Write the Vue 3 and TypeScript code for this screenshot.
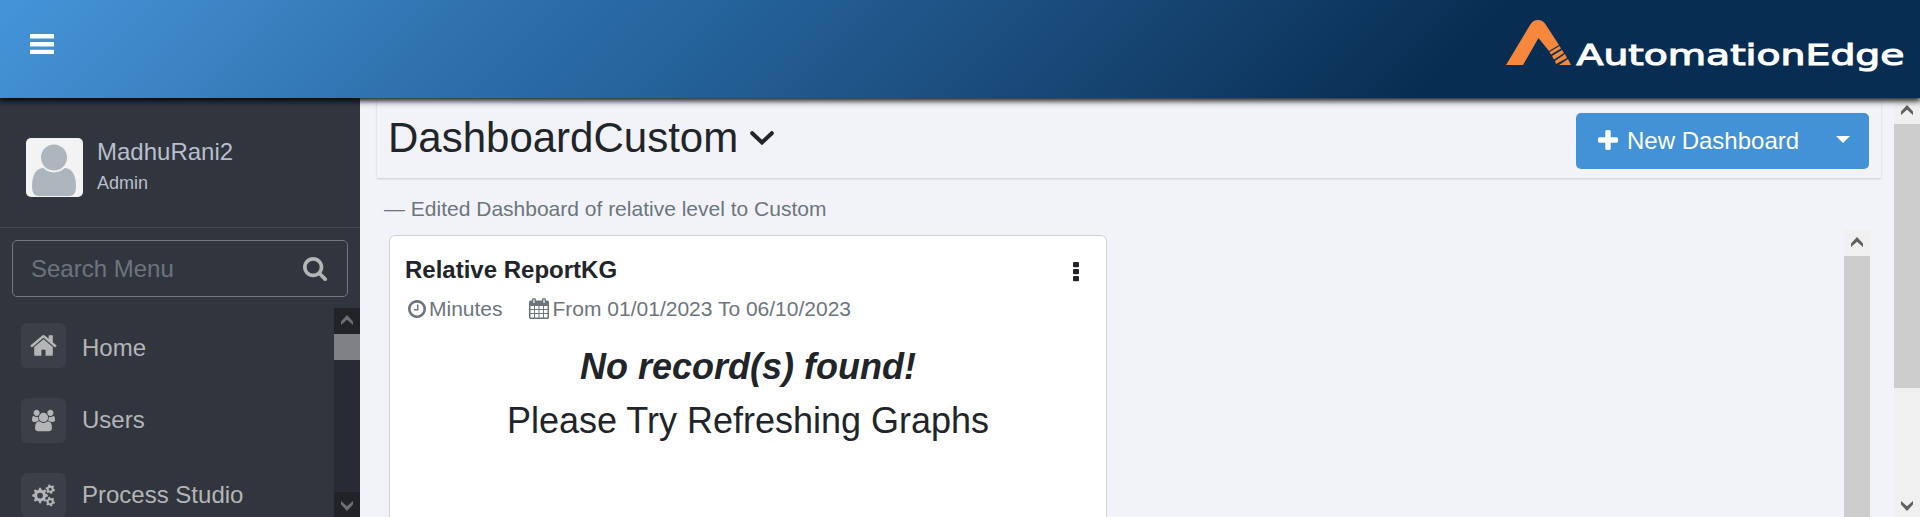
<script setup lang="ts">
interface MenuItem { label: string; icon: string; box: string; size: number }

/** Builds a toothed wheel with a round hole, centred on (cx, cy). */
function gear(cx: number, cy: number, r: number, teeth: number, hole: number, phase = 0): string {
  const pts: string[] = []
  const step = (Math.PI * 2) / teeth
  const profile: [number, number][] = [[-0.3, 0.76], [-0.17, 1], [0.17, 1], [0.3, 0.76]]
  for (let i = 0; i < teeth; i++) {
    for (const [offset, k] of profile) {
      const a = (i + offset + phase) * step
      pts.push(`${(cx + Math.cos(a) * r * k).toFixed(2)} ${(cy + Math.sin(a) * r * k).toFixed(2)}`)
    }
  }
  return `M${pts.join('L')}ZM${cx - hole} ${cy}a${hole} ${hole} 0 1 0 ${hole * 2} 0a${hole} ${hole} 0 1 0 ${-hole * 2} 0Z`
}

const cogs = gear(8.4, 12, 8.2, 8, 3) + gear(19, 5.4, 5, 6, 1.6, 0.25) + gear(19, 18.4, 5, 6, 1.6, 0.25)
const home = 'M1472 992v480q0 26-19 45t-45 19h-384v-384h-256v384h-384q-26 0-45-19t-19-45v-480q0-1 .5-3t.5-3l575-474 575 474q1 2 1 6zm223-69l-62 74q-8 9-21 11h-3q-13 0-21-7l-692-577-692 577q-12 8-24 7-13-2-21-11l-62-74q-8-10-7-23.5t11-21.5l719-599q32-26 76-26t76 26l244 204v-195q0-14 9-23t23-9h192q14 0 23 9t9 23v408l219 182q10 8 11 21.5t-7 23.5z'
const users = 'M529 896q-162 5-265 128h-134q-82 0-138-40.5t-56-118.5q0-353 124-353 6 0 43.5 21t97.5 42.5 119 21.5q67 0 133-23-5 37-5 66 0 139 81 256zm1071 637q0 120-73 189.5t-194 69.5h-874q-121 0-194-69.5t-73-189.5q0-53 3.5-103.5t14-109 26.5-108.5 43-97.5 62-81 85.5-53.5 111.5-20q10 0 43 21.5t73 48 107 48 135 21.5 135-21.5 107-48 73-48 43-21.5q61 0 111.5 20t85.5 53.5 62 81 43 97.5 26.5 108.5 14 109 3.5 103.5zm-1024-1277q0 106-75 181t-181 75-181-75-75-181 75-181 181-75 181 75 75 181zm704 384q0 159-112.5 271.5t-271.5 112.5-271.5-112.5-112.5-271.5 112.5-271.5 271.5-112.5 271.5 112.5 112.5 271.5zm576 225q0 78-56 118.5t-138 40.5h-134q-103-123-265-128 81-117 81-256 0-29-5-66 66 23 133 23 59 0 119-21.5t97.5-42.5 43.5-21q124 0 124 353zm-128-609q0 106-75 181t-181 75-181-75-75-181 75-181 181-75 181 75 75 181z'

const items: MenuItem[] = [
  { label: 'Home', icon: home, box: '0 0 1792 1792', size: 29 },
  { label: 'Users', icon: users, box: '-64 0 1920 1792', size: 23 },
  { label: 'Process Studio', icon: cogs, box: '0 0 24 24', size: 23 },
]
</script>

<template>
  <div class="page">
    <header class="topbar">
      <svg class="burger" width="24" height="20" viewBox="0 0 24 20" fill="#fff"><rect y="0" width="24" height="4.6" rx=".5" /><rect y="8" width="24" height="4.6" rx=".5" /><rect y="15.800" width="24" height="4.200" rx=".5" /></svg>
      <svg class="brand" width="400" height="56" viewBox="0 0 400 56">
        <path fill="#f6873c" d="M0 45 24 5Q27 0 32 0T40 5L53 25 43 31 32.500 18 17 45Z" />
        <path fill="#f6873c" d="M43.500 32 53.500 26 55 28.500 45 34.500ZM46 36 56 30 58 33 48 39.500ZM49 41 59 34 61 38 50 44ZM53 45 62 39 65 45Z" />
        <text class="brand-name" x="70.5" y="44.600" textLength="328" lengthAdjust="spacingAndGlyphs">AutomationEdge</text>
      </svg>
    </header>

    <div class="body">
      <aside class="sidebar">
        <div class="profile">
          <svg class="avatar" width="57" height="59" viewBox="0 0 57 59">
            <rect width="57" height="59" rx="5" fill="#f3f3f3" />
            <path d="M6 49Q6 31 17 30H39Q50 31 50 49 50 58 43 58H13Q6 58 6 49Z" fill="#adb5bd" />
            <circle cx="28" cy="19.500" r="14" fill="#adb5bd" stroke="#f3f3f3" stroke-width="2" />
          </svg>
          <div class="who"><div class="name">MadhuRani2</div><div class="role">Admin</div></div>
        </div>
        <div class="search">
          <span>Search Menu</span>
          <svg width="24" height="24" viewBox="64 128 1664 1664" fill="#b4b5b7"><path d="M1216 832q0-185-131.5-316.500T768 384 451.500 515.500 320 832t131.500 316.500T768 1280t316.500-131.500T1216 832zm512 832q0 52-38 90t-90 38q-54 0-90-38l-343-342q-179 124-399 124-143 0-273.500-55.500t-225-150-150-225T64 832t55.500-273.500 150-225 225-150T768 128t273.500 55.500 225 150 150 225T1472 832q0 220-124 399l343 343q37 37 37 90z" /></svg>
        </div>
        <div class="menu-wrap">
          <nav class="menu">
            <div v-for="item in items" :key="item.label" class="item">
              <span class="tile"><svg :width="item.size" :height="item.size" :viewBox="item.box" fill="#b4b5b7" fill-rule="evenodd"><path :d="item.icon" /></svg></span>
              <span class="label">{{ item.label }}</span>
            </div>
          </nav>
          <div class="bar dark">
            <div class="btn"><svg width="12" height="10" viewBox="0 0 12 10"><path d="M0 6.500 6 0 12 6.500V10L6 4.800 0 10Z" /></svg></div>
            <div class="thumb side-thumb"></div>
            <div class="btn end"><svg width="12" height="10" viewBox="0 0 12 10"><path d="M0 3.500 6 10 12 3.500V0L6 5.200 0 0Z" /></svg></div>
          </div>
        </div>
      </aside>

      <main class="content">
        <div class="titlebar">
          <h1>DashboardCustom</h1>
          <svg class="chev" width="24" height="15" viewBox="0 0 24 15"><path d="M2.200 2.200 12 11.500 21.800 2.200" fill="none" stroke="#212529" stroke-width="4" stroke-linecap="round" /></svg>
          <div class="new">
            <svg width="20" height="20" viewBox="192 128 1408 1408" fill="#fff"><path d="M1600 736v192q0 40-28 68t-68 28h-416v416q0 40-28 68t-68 28h-192q-40 0-68-28t-28-68v-416h-416q-40 0-68-28t-28-68v-192q0-40 28-68t68-28h416v-416q0-40 28-68t68-28h192q40 0 68 28t28 68v416h416q40 0 68 28t28 68z" /></svg>
            <span>New Dashboard</span>
            <i class="caret"></i>
          </div>
        </div>
        <p class="sub">— Edited Dashboard of relative level to Custom</p>
        <div class="board">
          <section class="card">
            <div class="card-head">
              <h2>Relative ReportKG</h2>
              <svg class="dots" width="6" height="20" viewBox="0 0 6 20" fill="#212529"><rect y="0" width="6" height="5.300" rx="1" /><rect y="7" width="6" height="5.300" rx="1" /><rect y="14" width="6" height="5.300" rx="1" /></svg>
            </div>
            <div class="meta">
              <svg class="clock" width="18" height="18" viewBox="128 128 1536 1536"><path d="M1024 544v448q0 14-9 23t-23 9h-320q-14 0-23-9t-9-23v-64q0-14 9-23t23-9h224v-352q0-14 9-23t23-9h64q14 0 23 9t9 23zm416 352q0-148-73-273t-198-198-273-73-273 73-198 198-73 273 73 273 198 198 273 73 273-73 198-198 73-273zm224 0q0 209-103 385.500t-279.500 279.500-385.500 103-385.500-103-279.500-279.500-103-385.500 103-385.500 279.500-279.500 385.500-103 385.500 103 279.500 279.500 103 385.500z" /></svg>
              <span>Minutes</span>
              <svg class="cal" width="20" height="21" viewBox="0 0 20 21" fill-rule="evenodd"><path d="M1.500 2.500H3V1.500Q3 0 5 0T7 1.500V2.500H13V1.500Q13 0 15 0T17 1.500V2.500H18.500Q20 2.500 20 4V19.500Q20 21 18.500 21H1.500Q0 21 0 19.500V4Q0 2.500 1.500 2.500ZM4.400 1.500V5H5.600V1.500ZM14.400 1.500V5H15.600V1.500ZM1.500 8V11H5V8ZM6 8V11H9.500V8ZM10.500 8V11H14V8ZM15 8V11H18.500V8ZM1.500 12V15H5V12ZM6 12V15H9.500V12ZM10.500 12V15H14V12ZM15 12V15H18.500V12ZM1.500 16V19.500H5V16ZM6 16V19.500H9.500V16ZM10.500 16V19.500H14V16ZM15 16V19.500H18.500V16Z" /></svg>
              <span>From 01/01/2023 To 06/10/2023</span>
            </div>
            <div class="empty"><div class="none">No record(s) found!</div><div>Please Try Refreshing Graphs</div></div>
          </section>
          <div class="bar light">
            <div class="btn"><svg width="12" height="10" viewBox="0 0 12 10"><path d="M0 6.500 6 0 12 6.500V10L6 4.800 0 10Z" /></svg></div>
            <div class="thumb grow"></div>
          </div>
        </div>
      </main>
      <div class="bar light">
        <div class="btn"><svg width="12" height="10" viewBox="0 0 12 10"><path d="M0 6.500 6 0 12 6.500V10L6 4.800 0 10Z" /></svg></div>
        <div class="thumb page-thumb"></div>
        <div class="btn end"><svg width="12" height="10" viewBox="0 0 12 10"><path d="M0 3.500 6 10 12 3.500V0L6 5.200 0 0Z" /></svg></div>
      </div>
    </div>
  </div>
</template>

<style>
body { margin: 0; overflow: hidden; }
</style>
<style scoped>
* { box-sizing: border-box; }
.page { width: 1920px; height: 517px; overflow: hidden; display: flex; flex-direction: column; background: #f2f3f8; color: #212529; font-family: "Liberation Sans", Arial, sans-serif; font-size: 24px; line-height: 36px; }
svg { display: block; flex: none; }
.topbar { position: relative; z-index: 2; height: 98px; flex: none; display: flex; justify-content: space-between; padding: 0 14px 0 30px; background: linear-gradient(135deg, #4594d9 0%, #3c84c4 12%, #3073af 23%, #24629a 37%, #1d5081 50%, #082d52 75%); box-shadow: 0 2px 6px 1px rgba(0, 0, 0, .9); }
.burger { margin-top: 34px; }
.brand { margin-top: 20px; overflow: visible; }
.brand-name { font-family: "DejaVu Sans", sans-serif; font-size: 28.5px; fill: #fff; stroke: #fff; stroke-width: 1.1px; }
.body { flex: 1; min-height: 0; display: flex; }
.sidebar { width: 360px; flex: none; background: #31353e; display: flex; flex-direction: column; }
.profile { height: 130px; flex: none; border-bottom: 1px solid #43464f; display: flex; padding: 40px 0 0 26px; gap: 14px; }
.who { color: #b8bfce; margin-top: -4px; }
.role { font-size: 18px; line-height: 27px; }
.search { flex: none; height: 57px; margin: 12px 12px 0; border: 1px solid #737780; border-radius: 5px; display: flex; justify-content: space-between; align-items: center; padding: 0 20px 0 18px; color: #6c757d; }
.menu-wrap { flex: 1; min-height: 0; margin-top: 11px; display: flex; }
.menu { flex: 1; overflow: hidden; padding-top: 15px; }
.item { height: 75px; padding-left: 21px; display: flex; gap: 16px; color: #b4b5b7; }
.tile { width: 45px; height: 45px; border-radius: 6px; background: #3a3f48; display: flex; align-items: center; justify-content: center; }
.label { line-height: 43px; }
.item:first-child .label { line-height: 49px; }
.bar { width: 26px; flex: none; display: flex; flex-direction: column; }
.btn { height: 26px; flex: none; display: flex; justify-content: center; padding-top: 7px; }
.end { height: 25px; margin-top: auto; padding-top: 9px; }
.dark { background: #282b33; fill: #6e6f72; }
.dark .btn { background: #222328; }
.light { background: #f0f0f0; fill: #606060; }
.thumb { flex: none; background: #cdcdcd; }
.side-thumb { height: 26px; background: #808184; }
.page-thumb { height: 264px; }
.grow { flex: 1; }
.content { flex: 1; min-width: 0; display: flex; flex-direction: column; padding: 0 13px 0 17px; }
.titlebar { height: 80px; flex: none; display: flex; padding: 0 12px 0 11px; box-shadow: 0 1px 2px rgba(0, 0, 0, .16); }
h1 { margin: 15px 0 0; font-size: 42px; font-weight: 400; line-height: 50px; }
.chev { margin: 33px 0 0 12px; }
.new { width: 293px; height: 56px; margin: 15px 0 0 auto; background: #4392d7; border-radius: 5px; color: #fff; display: flex; align-items: center; padding-left: 22px; gap: 9px; }
.new svg { margin-top: -2px; }
.caret { margin: -4px 0 0 28px; border: 7px solid transparent; border-top-color: #fff; border-bottom: 0; }
.sub { margin: 15px 0 0 7px; font-size: 21px; line-height: 32px; color: #6c757d; }
.board { flex: 1; min-height: 0; display: flex; justify-content: space-between; padding: 5px 11px 0 12px; }
.card { width: 718px; height: 400px; margin-top: 5px; background: #fff; border: 1px solid #ced1da; border-radius: 6px; padding: 16px 15px; }
.card-head { display: flex; justify-content: space-between; }
h2 { margin: 0; font-size: 24px; line-height: 36px; }
.dots { margin: 10px 12px 0 0; }
.meta { margin-top: 5px; height: 32px; display: flex; align-items: center; font-size: 21px; color: #6c757d; fill: #6c757d; }
.clock { margin: 0 3px 0 3px; }
.cal { margin: -2px 4px 0 26px; }
.empty { margin-top: 15px; text-align: center; font-size: 36px; line-height: 54px; }
.none { font-weight: 700; font-style: italic; }
</style>
